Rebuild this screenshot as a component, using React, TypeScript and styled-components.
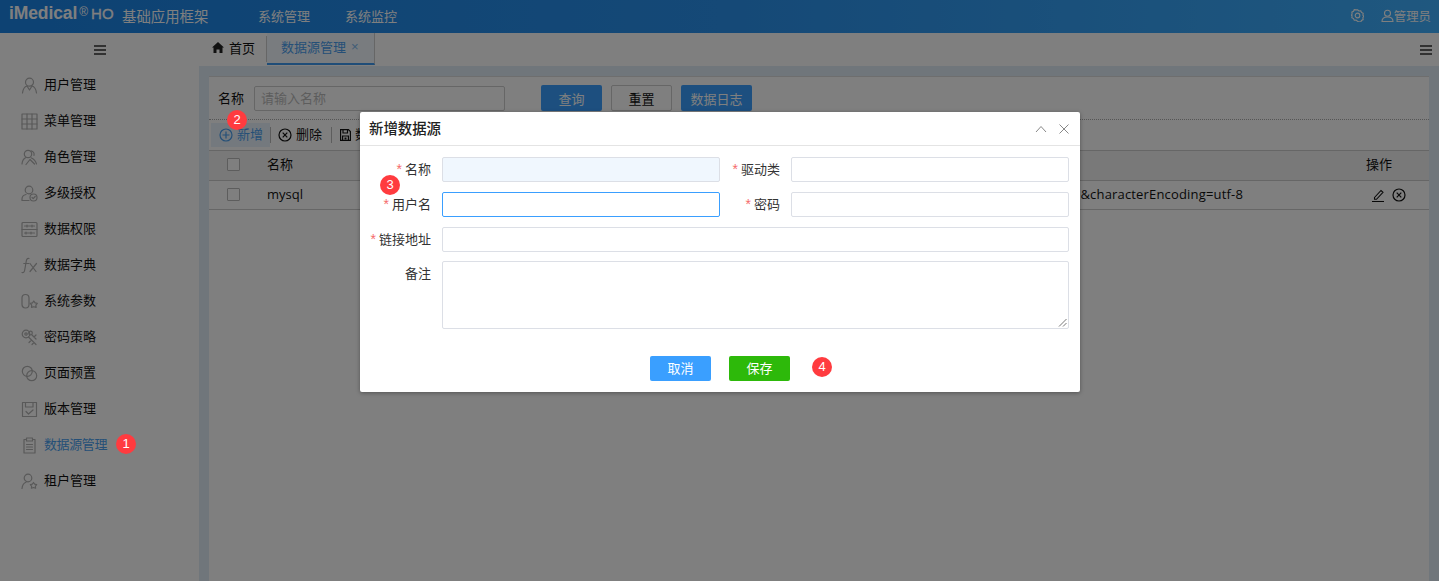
import React from "react";
import styled, { createGlobalStyle } from "styled-components";

const Global = createGlobalStyle`
  html, body { margin: 0; padding: 0; height: 100%; overflow: hidden; }
  body { font-family: "Open Sans", "Noto Sans CJK SC", sans-serif; font-size: 13px; color: #222; background: #e0ecf6; }
  #root { height: 100%; }
  * { box-sizing: border-box; }
`;

const Page = styled.div`
  width: 1439px; height: 581px; display: flex; flex-direction: column; position: relative; overflow: hidden;
`;
const Header = styled.header`
  height: 33px; flex: none; display: flex; align-items: center; padding: 0 8px 2px 9px;
  background: linear-gradient(90deg, #1a84e6 0%, #2a92ee 50%, #3fb0ff 100%);
  color: #fff;
`;
const Logo = styled.div`
  width: 113px; flex: none; display: flex; align-items: baseline; font-family: "Liberation Sans", sans-serif; color: #fff; margin-top: -4px;
`;
const LogoName = styled.span`font-size: 17.5px; font-weight: 700; letter-spacing: -.1px;`;
const LogoReg = styled.span`font-size: 12px; margin: 0 3px 0 2px; position: relative; top: -3px;`;
const LogoHO = styled.span`font-size: 15px; font-weight: 400; -webkit-text-stroke: .3px #fff;`;
const AppTitle = styled.div`font-size: 14.4px; width: 136px; flex: none;`;
const NavItem = styled.div`font-size: 13px; width: 87px; flex: none;`;
const HeaderRight = styled.div`margin-left: auto; display: flex; align-items: center; gap: 17px;`;
const UserBox = styled.div`display: flex; align-items: center; font-size: 12.4px;`;

const Body = styled.div`flex: 1; display: flex; min-height: 0;`;
const Sidebar = styled.aside`
  width: 199px; flex: none; background: #fff; display: flex; flex-direction: column;
`;
const SideToggle = styled.div`height: 34px; display: flex; align-items: center; justify-content: center;`;
const Menu = styled.nav`display: flex; flex-direction: column;`;
const MenuItem = styled.div<{ $active?: boolean }>`
  height: 36px; display: flex; align-items: center; padding-left: 21px; gap: 6px; font-size: 13px;
  color: ${(p) => (p.$active ? "#4a9fef" : "#111")};
  letter-spacing: ${(p) => (p.$active ? "-.4px" : "0")};
  svg { flex: none; color: #b2b2b2; }
  span { padding-bottom: 3px; }
`;

const Main = styled.main`flex: 1; display: flex; flex-direction: column; min-width: 0;`;
const TabBar = styled.div`
  height: 33px; flex: none; background: #fff; display: flex; align-items: stretch;
`;
const HomeTab = styled.div`
  width: 68px; display: flex; align-items: center; padding: 0 0 3px 13px; gap: 5px; font-size: 13px; color: #111;
  border-right: 1px solid #ccc; margin: 3px 0 4px;
`;
const ActiveTab = styled.div`
  width: 108px; display: flex; align-items: center; padding: 0 0 3px 14px; gap: 5px; font-size: 13px; color: #4a9fef;
  background: #f3f9ff; border-bottom: 2px solid #3f9bf0; border-right: 1px solid #ccc; height: 32px;
`;
const TabClose = styled.span`font-family: "Liberation Sans", sans-serif; font-size: 13px; color: #7fb8ee; line-height: 1;`;
const TabMenu = styled.div`margin-left: auto; display: flex; align-items: center; padding-right: 7px;`;

const Content = styled.div`flex: 1; padding: 10px 10px 0; min-height: 0;`;
const Panel = styled.section`background: #fff; height: 100%; border-top: 1px solid #ddd;`;
const SearchRow = styled.div`
  height: 43px; display: flex; align-items: center; padding-left: 9px; border-bottom: 1px dotted #aaa;
`;
const SearchLabel = styled.label`font-size: 13px; width: 36px; flex: none; color: #111; padding-bottom: 2px;`;
const SearchInput = styled.div`
  width: 251px; height: 25px; border: 1px solid #ccc; border-radius: 2px; padding-left: 6px; margin-right: 36px;
  color: #bbb; font-size: 13px; line-height: 23px;
`;
const Btn = styled.button<{ $w: number; $kind: "primary" | "plain" | "green" }>`
  width: ${(p) => p.$w}px; height: 26px; border-radius: 2px; font: inherit; font-size: 13px; padding: 0; margin-right: 9px;
  font-family: "Noto Sans CJK SC", sans-serif;
  border: 1px solid ${(p) => (p.$kind === "plain" ? "#ccc" : "transparent")};
  color: ${(p) => (p.$kind === "plain" ? "#111" : "#fff")};
  background: ${(p) => (p.$kind === "plain" ? "#fff" : p.$kind === "green" ? "#2db90a" : "#3a9fff")};
`;
const ToolRow = styled.div`height: 30px; display: flex; align-items: center; padding-left: 2px;`;
const Tool = styled.div<{ $hl?: boolean; $pl: number; $pr: number }>`
  display: flex; align-items: center; gap: 4px; height: 24px; padding: 0 ${(p) => p.$pr}px 0 ${(p) => p.$pl}px; font-size: 13px;
  color: ${(p) => (p.$hl ? "#4a9fef" : "#111")};
  background: ${(p) => (p.$hl ? "#e8f3fd" : "transparent")};
  span { padding-bottom: 3px; }
`;
const ClippedLabel = styled.span`width: 5px; overflow: hidden; white-space: nowrap;`;
const ToolSep = styled.span`width: 1px; height: 16px; background: #bbb;`;

const Row = styled.div<{ $head?: boolean }>`
  display: grid; grid-template-columns: 48px 1fr 190px 114px 72px; align-items: center;
  height: 30px; padding-bottom: 2px; border-top: 1px solid #ccc; font-size: 13px; color: #111;
  background: ${(p) => (p.$head ? "#f2f2f2" : "#fff")};
  &:last-child { border-bottom: 1px solid #ccc; padding-bottom: 1px; }
`;
const CheckCell = styled.div`
  width: 13px; height: 13px; border: 1px solid #bbb; border-radius: 1px; margin-left: 18px; background: #fff;
`;
const Cell = styled.div`padding: 0 0 2px 10px; white-space: nowrap; overflow: hidden;`;
const UrlCell = styled.div`display: flex; justify-content: flex-end; white-space: nowrap; overflow: hidden; letter-spacing: .17px; padding-bottom: 2px;`;
const OpCell = styled.div`padding-left: 14px; display: flex; align-items: center; gap: 7px;`;
const HeadOp = styled.div`padding: 0 0 3px 9px;`;

const Mask = styled.div`position: absolute; inset: 0; background: rgba(0, 0, 0, .5);`;
const Dialog = styled.div`
  position: absolute; left: 360px; top: 112px; width: 720px; height: 280px; background: #fff; border-radius: 2px;
  box-shadow: 0 1px 4px rgba(0,0,0,.35); display: flex; flex-direction: column;
`;
const DialogHead = styled.div`
  height: 34px; flex: none; border-bottom: 1px solid #e4e4e4; display: flex; align-items: center; padding: 0 11px 0 9px;
`;
const DialogTitle = styled.div`font-size: 14.4px; font-weight: 500; color: #222; font-family: "Noto Sans CJK SC", sans-serif; padding-bottom: 2px;`;
const DialogTools = styled.div`margin-left: auto; display: flex; align-items: center; gap: 12px; color: #888;`;
const Form = styled.div`
  padding: 11px 11px 0 0; display: grid; grid-template-columns: 82px 278px 71px 278px; row-gap: 10px;
  column-gap: 0; justify-content: end;
`;
const FieldLabel = styled.label<{ $tall?: boolean }>`
  height: 25px; font-size: 13px; color: #333; text-align: right; padding-right: 11px; line-height: 23px;
  font-family: "Noto Sans CJK SC", sans-serif; white-space: nowrap;
  ${(p) => (p.$tall ? "margin-top: -1px;" : "")}
`;
const Req = styled.span`color: #f56c6c; margin-right: 3px; font-size: 14px; font-family: "Liberation Sans", sans-serif;`;
const Input = styled.div<{ $state?: "filled" | "focus"; $wide?: boolean }>`
  height: 25px; border-radius: 2px; background: ${(p) => (p.$state === "filled" ? "#f0f7fe" : "#fff")};
  border: 1px solid ${(p) => (p.$state === "focus" ? "#3a9fff" : "#dcdfe6")};
  ${(p) => (p.$wide ? "grid-column: 2 / span 3;" : "")}
`;
const TextArea = styled.div`
  grid-column: 2 / span 3; height: 68px; border-radius: 2px; border: 1px solid #dcdfe6; margin-top: -1px; position: relative;
`;
const Resize = styled.svg`position: absolute; right: 1px; bottom: 1px;`;
const DialogFoot = styled.div`
  margin-top: 27px; display: flex; justify-content: center; gap: 18px;
  button { margin: 0; height: 25px; padding-bottom: 2px; }
`;
const Badge = styled.span<{ $x: number; $y: number }>`
  position: absolute; left: ${(p) => p.$x - 10}px; top: ${(p) => p.$y - 10}px; width: 20px; height: 20px; border-radius: 50%;
  background: #ff3b3f; color: #fff; font-size: 13px; line-height: 20px; text-align: center; font-family: "Liberation Sans", sans-serif;
`;

const Svg = ({ children, s = 17 }: { children: React.ReactNode; s?: number }) => (
  <svg width={s} height={s} viewBox="0 0 17 17" fill="none" stroke="currentColor" strokeWidth="1.2" strokeLinecap="round" strokeLinejoin="round">{children}</svg>
);
const Burger = () => (
  <svg width="12" height="10" viewBox="0 0 12 10"><path d="M0 1h12M0 5h12M0 9h12" stroke="#333" strokeWidth="1.6" /></svg>
);
const CircleX = ({ c = "#111" }: { c?: string }) => (
  <svg width="14" height="14" viewBox="0 0 14 14" fill="none" stroke={c} strokeWidth="1.2"><circle cx="7" cy="7" r="6" /><path d="M4.7 4.7l4.6 4.6M9.3 4.7l-4.6 4.6" /></svg>
);
const CirclePlus = ({ c = "#111" }: { c?: string }) => (
  <svg width="14" height="14" viewBox="0 0 14 14" fill="none" stroke={c} strokeWidth="1.2"><circle cx="7" cy="7" r="6" /><path d="M7 3.500v7M3.500 7h7" /></svg>
);
const SaveIcon = () => (
  <svg width="11" height="12" viewBox="0 0 11 12" fill="none" stroke="#111" strokeWidth="1.2"><path d="M.6.600h7.800l2 2v8.800H.6z" /><path d="M3 .600v3.400h4.500V.600M2.600 11.400V7h5.800v4.400" /><path d="M4.500 8.500h2v2h-2z" fill="#111" stroke="none" /></svg>
);

const icons: Record<string, React.ReactNode> = {
  user: <><circle cx="8.5" cy="5.2" r="4" /><path d="M1.5 16c.5-4 2.500-6.500 4.500-7l2.500 4 2.500-4c2 .5 4 3 4.500 7" /></>,
  grid: <><rect x="1" y="1" width="15" height="15" /><path d="M6 1v15M11 1v15M1 6h15M1 11h15" /></>,
  role: <><circle cx="7" cy="5" r="3.700" /><path d="M1 15c.3-3.500 2-5.500 3.500-6.300M10 1.800c2.500.5 3.500 2.500 3 4.500M10 8.800c2.500 1 4.500 3 5.500 6.200M5 15.500l4-5 4.500 4.500" /></>,
  auth: <><circle cx="8" cy="5" r="3.800" /><path d="M5 9.500c-2.500.5-4 2-4 4.500v1.500h7" /><circle cx="12.500" cy="12.500" r="3.500" /><path d="M11 12.500l1.200 1.200 2-2.200" /></>,
  data: <><rect x="1" y="1.500" width="15" height="14" rx="1" /><path d="M1 8.500h15M3.500 5h10M3.500 12h10M6 4v2M11 4v2M5 11v2M10 11v2" /></>,
  fx: <><path d="M8 1.500C6 1 5.500 2.500 5.200 4.500L3.800 12.500C3.500 15 2.500 16 1 15.500M2.800 6.500h5" /><path d="M9 6.500l6 8M15.500 6.500l-6.500 8" /></>,
  param: <><rect x="1" y="1.500" width="7" height="13.500" rx="3.500" /><path d="M12.800 8l1.300 1.800 2.200.5-1.400 1.800.2 2.300-2.300-.7-2.300.7.200-2.300-1.400-1.800 2.200-.5z" /></>,
  key: <><circle cx="5" cy="5" r="3.800" /><circle cx="5" cy="5" r="1.200" /><circle cx="9.500" cy="4" r="1.800" /><path d="M7.500 8l7.500 7.500M10.500 11l-2.500 2.500M13 13.500l-2 2M11 6l4 4M15 6l-2 2" /></>,
  page: <><circle cx="6.300" cy="6.300" r="5" /><circle cx="10.700" cy="10.700" r="5" /></>,
  ver: <><path d="M1.500 1.500h14v14h-14zM4.500 1.500v4.500h7.500V1.500M5 10.500l2.500 2.500 4.500-4" /></>,
  clip: <><path d="M5.500 2.500H3v13.500h11V2.500h-2.500M5.500 1h6v3h-6zM5.500 7.500h6M5.500 10h6M5.500 12.500h6" /></>,
  tenant: <><circle cx="7" cy="5" r="3.800" /><path d="M1 15.500c.3-3.500 2-5.500 4-6.300" /><path d="M12.500 9.500l1.200 1.600 2 .5-1.300 1.600.2 2-2.100-.7-2.100.7.200-2 -1.300-1.600 2-.5z" /></>,
};

const menu: [string, string][] = [
  ["user", "用户管理"], ["grid", "菜单管理"], ["role", "角色管理"], ["auth", "多级授权"],
  ["data", "数据权限"], ["fx", "数据字典"], ["param", "系统参数"], ["key", "密码策略"],
  ["page", "页面预置"], ["ver", "版本管理"], ["clip", "数据源管理"], ["tenant", "租户管理"],
];

export default function App() {
  return (
    <Page>
      <Global />
      <Header>
        <Logo><LogoName>iMedical</LogoName><LogoReg>®</LogoReg><LogoHO>HO</LogoHO></Logo>
        <AppTitle>基础应用框架</AppTitle>
        <NavItem>系统管理</NavItem>
        <NavItem>系统监控</NavItem>
        <HeaderRight>
          <svg width="13" height="13" viewBox="0 0 14 14" fill="none" stroke="#fff" strokeWidth="1.200"><path d="M7 .8l1.500 1.300 2-.2.8 1.800 1.800.9-.3 2 .9 1.400-.9 1.400.3 2-1.800.9-.8 1.800-2-.2L7 13.200l-1.500-1.300-2 .2-.8-1.800-1.800-.9.300-2L.3 6.800l.9-1.400-.3-2 1.800-.9.8-1.800 2 .2z" /><circle cx="7" cy="7" r="2.500" /></svg>
          <UserBox>
            <svg width="13" height="13" viewBox="0 0 13 13" fill="none" stroke="#fff" strokeWidth="1.100"><circle cx="6.500" cy="4.200" r="3" /><path d="M1 12.500c0-3 2-4.500 5.500-4.500s5.500 1.500 5.500 4.500z" /></svg>
            <span>管理员</span>
          </UserBox>
        </HeaderRight>
      </Header>
      <Body>
        <Sidebar>
          <SideToggle><Burger /></SideToggle>
          <Menu>
            {menu.map(([k, t]) => (
              <MenuItem key={t} $active={k === "clip"}>
                <Svg>{icons[k]}</Svg>
                <span>{t}</span>
              </MenuItem>
            ))}
          </Menu>
        </Sidebar>
        <Main>
          <TabBar>
            <HomeTab>
              <svg width="12" height="11" viewBox="0 0 12 11"><path d="M6 0L0 5.500h1.500V11h3V7.500h3V11h3V5.500H12z" fill="#222" /></svg>
              <span>首页</span>
            </HomeTab>
            <ActiveTab>
              <span>数据源管理</span>
              <TabClose>×</TabClose>
            </ActiveTab>
            <TabMenu><Burger /></TabMenu>
          </TabBar>
          <Content>
            <Panel>
              <SearchRow>
                <SearchLabel>名称</SearchLabel>
                <SearchInput>请输入名称</SearchInput>
                <Btn $w={61} $kind="primary">查询</Btn>
                <Btn $w={61} $kind="plain">重置</Btn>
                <Btn $w={71} $kind="primary">数据日志</Btn>
              </SearchRow>
              <ToolRow>
                <Tool $hl $pl={8} $pr={7}>
                  <CirclePlus c="#4a9fef" />
                  <span>新增</span>
                </Tool>
                <ToolSep />
                <Tool $pl={7} $pr={9}><CircleX /><span>删除</span></Tool>
                <ToolSep />
                <Tool $pl={8} $pr={0}><SaveIcon /><ClippedLabel>数据</ClippedLabel></Tool>
              </ToolRow>
              <Row $head>
                <CheckCell />
                <Cell>名称</Cell>
                <Cell />
                <Cell />
                <HeadOp>操作</HeadOp>
              </Row>
              <Row>
                <CheckCell />
                <Cell>mysql</Cell>
                <UrlCell>e&amp;characterEncoding=utf-8</UrlCell>
                <Cell />
                <OpCell>
                  <svg width="14" height="14" viewBox="0 0 14 14" fill="none" stroke="#111" strokeWidth="1.100"><path d="M3.500 9.500L10 2.500l2 1.800-6.500 7H3.500zM1 13.500h12" /></svg>
                  <CircleX />
                </OpCell>
              </Row>
            </Panel>
          </Content>
        </Main>
      </Body>
      <Mask />
      <Dialog>
        <DialogHead>
          <DialogTitle>新增数据源</DialogTitle>
          <DialogTools>
            <svg width="12" height="8" viewBox="0 0 12 8" fill="none" stroke="#888" strokeWidth="1"><path d="M1 7l5-5.500L11 7" /></svg>
            <svg width="10" height="10" viewBox="0 0 10 10" fill="none" stroke="#888" strokeWidth="1"><path d="M.5.500l9 9M9.500.500l-9 9" /></svg>
          </DialogTools>
        </DialogHead>
        <Form>
          <FieldLabel><Req>*</Req>名称</FieldLabel>
          <Input $state="filled" />
          <FieldLabel><Req>*</Req>驱动类</FieldLabel>
          <Input />
          <FieldLabel><Req>*</Req>用户名</FieldLabel>
          <Input $state="focus" />
          <FieldLabel><Req>*</Req>密码</FieldLabel>
          <Input />
          <FieldLabel><Req>*</Req>链接地址</FieldLabel>
          <Input $wide />
          <FieldLabel $tall>备注</FieldLabel>
          <TextArea>
            <Resize width="9" height="9" viewBox="0 0 9 9" fill="none" stroke="#777" strokeWidth="1"><path d="M8.500 1L1 8.500M8.500 5L5 8.500" /></Resize>
          </TextArea>
        </Form>
        <DialogFoot>
          <Btn $w={61} $kind="primary">取消</Btn>
          <Btn $w={61} $kind="green">保存</Btn>
        </DialogFoot>
      </Dialog>
      <Badge $x={126} $y={444}>1</Badge>
      <Badge $x={237} $y={120}>2</Badge>
      <Badge $x={390} $y={185}>3</Badge>
      <Badge $x={822} $y={367}>4</Badge>
    </Page>
  );
}
